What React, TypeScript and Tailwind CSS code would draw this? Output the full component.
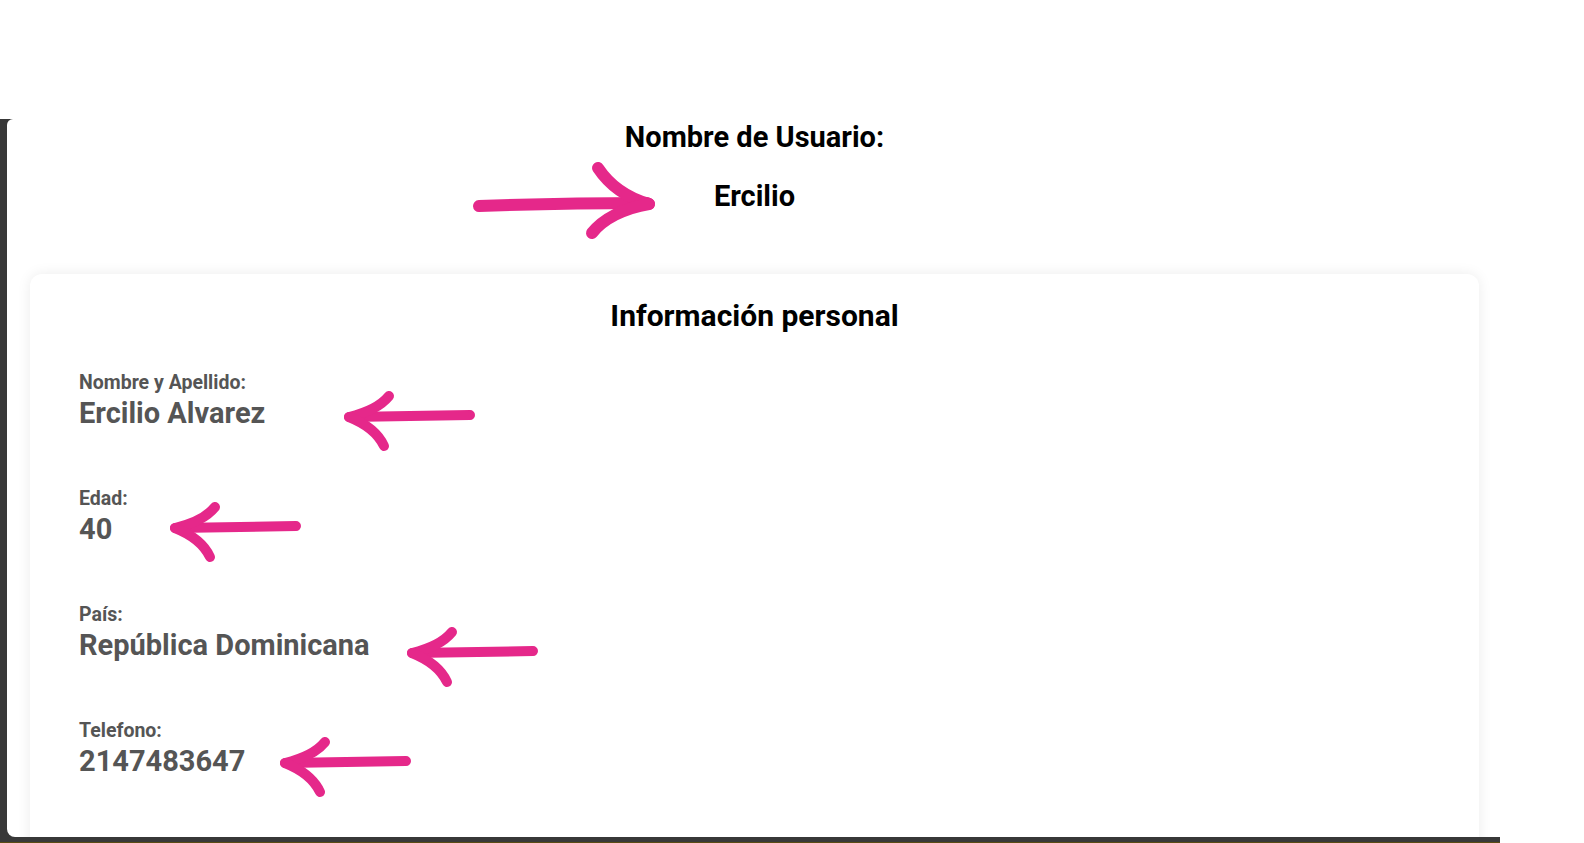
import React from 'react';

const PINK = '#e5288a';

const fields = [
  { label: 'Nombre y Apellido:', value: 'Ercilio Alvarez' },
  { label: 'Edad:', value: '40' },
  { label: 'País:', value: 'República Dominicana' },
  { label: 'Telefono:', value: '2147483647' },
];

// tips of the left-pointing marker arrows, in page coordinates
const leftArrows = [
  { x: 348, y: 417 },
  { x: 174, y: 528 },
  { x: 411, y: 653 },
  { x: 284, y: 763 },
];

function LeftArrow({ x, y }: { x: number; y: number }) {
  return (
    <g transform={`translate(${x} ${y})`}>
      <path d="M 2 0 Q 60 -1 122 -2" />
      <path d="M 41 -21 C 32 -10 18 -4 1 0" />
      <path d="M 1 0 C 16 6 30 16 36 29" />
    </g>
  );
}

function Annotations() {
  return (
    <svg
      className="pointer-events-none absolute inset-0"
      width="1584"
      height="843"
      viewBox="0 0 1584 843"
      fill="none"
      stroke={PINK}
      strokeWidth="10"
      strokeLinecap="round"
      strokeLinejoin="round"
    >
      {/* right-pointing arrow next to the user name */}
      <g strokeWidth="12">
        <path d="M 479 206 Q 562 203 647 203" />
        <path d="M 598 168 C 610 186 628 198 649 204" />
        <path d="M 649 204 C 624 208 603 219 592 233" />
      </g>
      {leftArrows.map((a, i) => (
        <LeftArrow key={i} x={a.x} y={a.y} />
      ))}
    </svg>
  );
}

export default function App() {
  return (
    <div className="relative h-[843px] w-[1584px] overflow-hidden bg-white font-['Roboto','Liberation_Sans',sans-serif]">
      <div className="pt-[119px]">
        <div className="h-[724px] w-[1500px] border-b border-b-[#5a4b14] bg-[#383838] pb-[5px] pl-[7px]">
          <div className="h-full overflow-hidden rounded-tl-[6px] rounded-bl-[8px] bg-white pt-[1px] pl-[23px] pr-[21px]">
            <h2 className="text-center text-[29px] leading-[34px] font-bold text-black">Nombre de Usuario:</h2>
            <p className="mt-[25px] text-center text-[29px] leading-[34px] font-bold text-black">Ercilio</p>

            <section className="mt-[61px] h-[700px] rounded-[12px] bg-white px-[49px] pt-[25px] shadow-[0_0_14px_rgba(0,0,0,0.08)]">
              <h3 className="text-center text-[30px] leading-[34px] font-bold text-black">Información personal</h3>
              <div className="mt-[39px] flex flex-col gap-[58px]">
                {fields.map((f) => (
                  <div key={f.label}>
                    <div className="text-[19.5px] leading-[22px] font-bold text-[#555555]">{f.label}</div>
                    <div className="mt-[2px] text-[29px] leading-[34px] font-bold text-[#555555]">{f.value}</div>
                  </div>
                ))}
              </div>
            </section>
          </div>
        </div>
      </div>
      <Annotations />
    </div>
  );
}
